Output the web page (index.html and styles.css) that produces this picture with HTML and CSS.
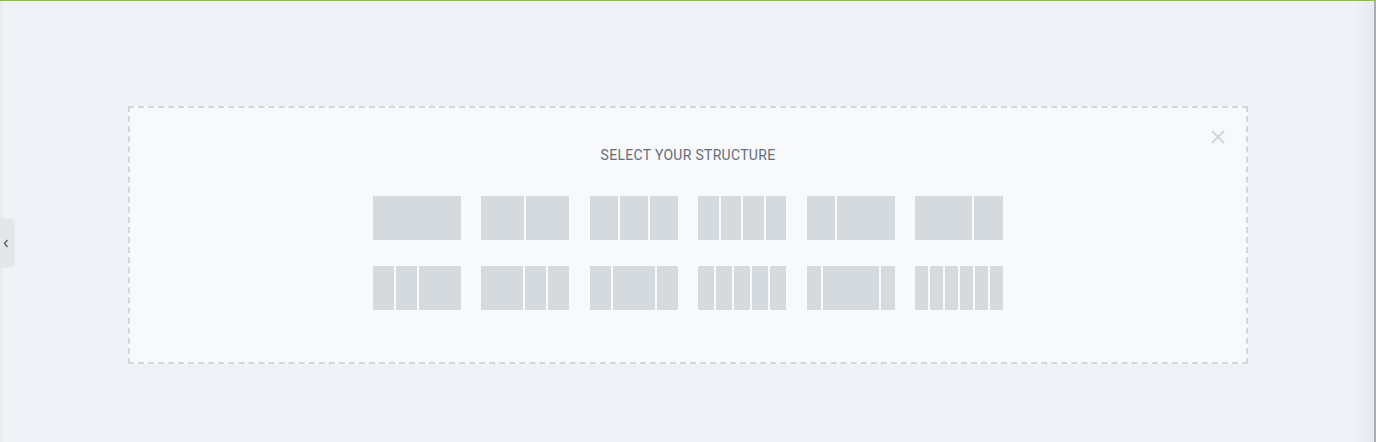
FILE: index.html
```html
<!DOCTYPE html>
<html lang="en">
<head>
    <meta charset="UTF-8">
    <meta name="viewport" content="width=device-width, initial-scale=1.0">
    <title>Select Structure</title>
    <link rel="stylesheet" href="styles.css">
</head>
<body>
    <div class="editor">
        <button class="side-toggle" type="button" aria-label="Toggle panel">
            <svg width="6" height="9" viewBox="0 0 6 9"><path d="M4.5 1 L1.5 4.5 L4.5 8" fill="none" stroke="#5a6470" stroke-width="1.4"/></svg>
        </button>

        <div class="dropzone">
            <button class="close" type="button" aria-label="Close">
                <svg width="14" height="14" viewBox="0 0 14 14"><path d="M1 1 L13 13 M13 1 L1 13" stroke="#d2d6da" stroke-width="2"/></svg>
            </button>
            <div class="title">Select your structure</div>

            <div class="structures">
                <div class="preset"><span style="flex: 1"></span></div>
                <div class="preset"><span style="flex: 1"></span><span style="flex: 1"></span></div>
                <div class="preset"><span style="flex: 1"></span><span style="flex: 1"></span><span style="flex: 1"></span></div>
                <div class="preset"><span style="flex: 1"></span><span style="flex: 1"></span><span style="flex: 1"></span><span style="flex: 1"></span></div>
                <div class="preset"><span style="flex: 1"></span><span style="flex: 2"></span></div>
                <div class="preset"><span style="flex: 2"></span><span style="flex: 1"></span></div>

                <div class="preset"><span style="flex: 1"></span><span style="flex: 1"></span><span style="flex: 2"></span></div>
                <div class="preset"><span style="flex: 2"></span><span style="flex: 1"></span><span style="flex: 1"></span></div>
                <div class="preset"><span style="flex: 1"></span><span style="flex: 2"></span><span style="flex: 1"></span></div>
                <div class="preset"><span style="flex: 1"></span><span style="flex: 1"></span><span style="flex: 1"></span><span style="flex: 1"></span><span style="flex: 1"></span></div>
                <div class="preset"><span style="flex: 1"></span><span style="flex: 4"></span><span style="flex: 1"></span></div>
                <div class="preset"><span style="flex: 1"></span><span style="flex: 1"></span><span style="flex: 1"></span><span style="flex: 1"></span><span style="flex: 1"></span><span style="flex: 1"></span></div>
            </div>
        </div>
    </div>
</body>
</html>
```

FILE: styles.css
```css
html, body { margin: 0; height: 100%; }
body { background: #eff3f7; font-family: Roboto, "Liberation Sans", sans-serif; overflow: hidden; }

.editor { position: relative; border-top: 1px solid #8cbd4c; padding-top: 105px; box-sizing: border-box; height: 442px; }
/* right edge shade + thin scrollbar */
.editor::after { content: ""; position: absolute; top: 0; right: 0; width: 22px; height: 100%; background: linear-gradient(to right, rgba(220,225,230,0), #e6eaee 20px, #aaacb2 20px); }
.editor::before { content: ""; position: absolute; top: 0; left: 0; width: 4px; height: 100%; background: linear-gradient(to right, #e7ebee, rgba(239,243,247,0)); }

.side-toggle { position: absolute; left: 0; top: 218px; width: 13px; height: 48px; padding: 0 1px 0 0; border: none; border-radius: 0 3px 3px 0; background: #e4e7ea; box-shadow: 1px 0 3px rgba(0,0,0,0.08); display: flex; align-items: center; justify-content: center; cursor: pointer; z-index: 1; }

.dropzone { position: relative; width: 1120px; margin: 0 auto; box-sizing: border-box; border: 2px dashed #d3d7db; background: #f8f9fb; padding: 39px 0 52px; }
.close { position: absolute; top: 22px; right: 21px; padding: 0; border: none; background: none; display: block; cursor: pointer; }
.close svg { display: block; }

.title { text-align: center; text-transform: uppercase; font-size: 14px; letter-spacing: 0.3px; line-height: 16px; color: #646e78; margin-bottom: 33px; }

.structures { width: 630px; margin: 0 auto; display: grid; grid-template-columns: repeat(6, 88px); justify-content: space-between; row-gap: 26px; }
.preset { display: flex; gap: 2px; height: 44px; cursor: pointer; }
.preset span { background: #d5dadf; }
.preset:hover span { background: #c8ced4; }
```
